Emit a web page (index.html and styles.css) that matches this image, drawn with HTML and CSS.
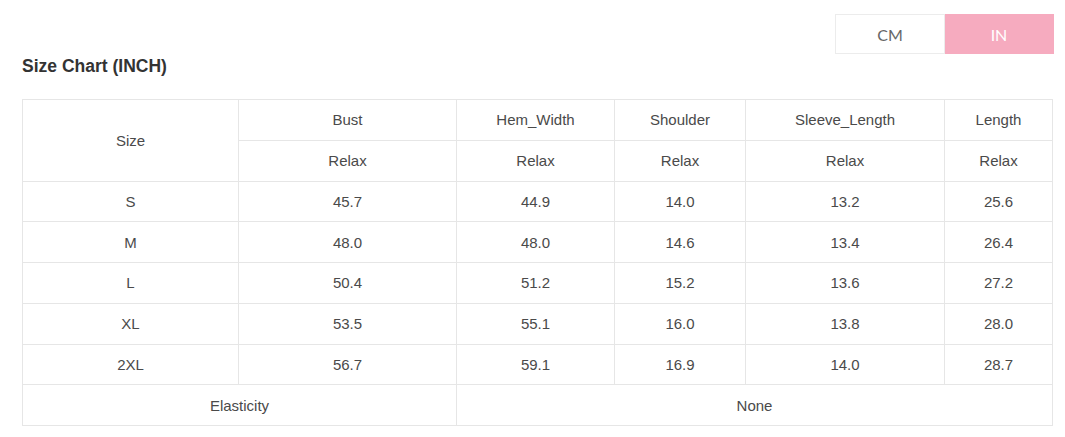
FILE: index.html
```html
<!DOCTYPE html>
<html>
<head>
<meta charset="utf-8">
<link rel="stylesheet" href="styles.css">
</head>
<body>
<div class="page">
  <div class="toolbar">
    <div class="unit-toggle">
      <div class="unit">CM</div>
      <div class="unit active">IN</div>
    </div>
  </div>
  <h2 class="title">Size Chart (INCH)</h2>
  <table class="chart">
    <colgroup>
      <col class="c1"><col class="c2"><col class="c3"><col class="c4"><col class="c5"><col class="c6">
    </colgroup>
    <tr><td rowspan="2">Size</td><td>Bust</td><td>Hem_Width</td><td>Shoulder</td><td>Sleeve_Length</td><td>Length</td></tr>
    <tr><td>Relax</td><td>Relax</td><td>Relax</td><td>Relax</td><td>Relax</td></tr>
    <tr><td>S</td><td>45.7</td><td>44.9</td><td>14.0</td><td>13.2</td><td>25.6</td></tr>
    <tr><td>M</td><td>48.0</td><td>48.0</td><td>14.6</td><td>13.4</td><td>26.4</td></tr>
    <tr><td>L</td><td>50.4</td><td>51.2</td><td>15.2</td><td>13.6</td><td>27.2</td></tr>
    <tr><td>XL</td><td>53.5</td><td>55.1</td><td>16.0</td><td>13.8</td><td>28.0</td></tr>
    <tr><td>2XL</td><td>56.7</td><td>59.1</td><td>16.9</td><td>14.0</td><td>28.7</td></tr>
    <tr><td colspan="2">Elasticity</td><td colspan="4">None</td></tr>
  </table>
</div>
</body>
</html>
```

FILE: styles.css
```css
html, body {
  margin: 0;
  padding: 0;
  background: #fff;
}
.page {
  padding: 14px 13px 0 22px;
  font-family: "Liberation Sans", Arial, sans-serif;
}
.toolbar {
  display: flex;
  justify-content: flex-end;
}
.unit-toggle {
  display: flex;
  margin-right: -2px;
}
.unit {
  width: 108px;
  height: 38px;
  display: flex;
  align-items: center;
  justify-content: center;
  font-family: Lato, sans-serif;
  font-size: 16px;
  font-weight: 400;
  color: #666;
  border: 1px solid #ececec;
}
.unit + .unit {
  border-left: none;
}
.unit.active {
  background: #f6abbf;
  border-color: #f6abbf;
  color: #fff;
}
.title {
  margin: 2px 0 0;
  font-size: 17.5px;
  font-weight: bold;
  color: #333;
  line-height: 20px;
}
.chart {
  margin-top: 23px;
  border-collapse: collapse;
  width: 1031px;
  table-layout: fixed;
  color: #4a4a4a;
  font-size: 15px;
}
.c1 { width: 216px; }
.c2 { width: 218px; }
.c3 { width: 158px; }
.c4 { width: 131px; }
.c5 { width: 199px; }
.c6 { width: 108px; }
.chart tr {
  height: 40.75px;
}
.chart td {
  border: 1px solid #e6e6e6;
  text-align: center;
  vertical-align: middle;
  padding: 0;
}
```
